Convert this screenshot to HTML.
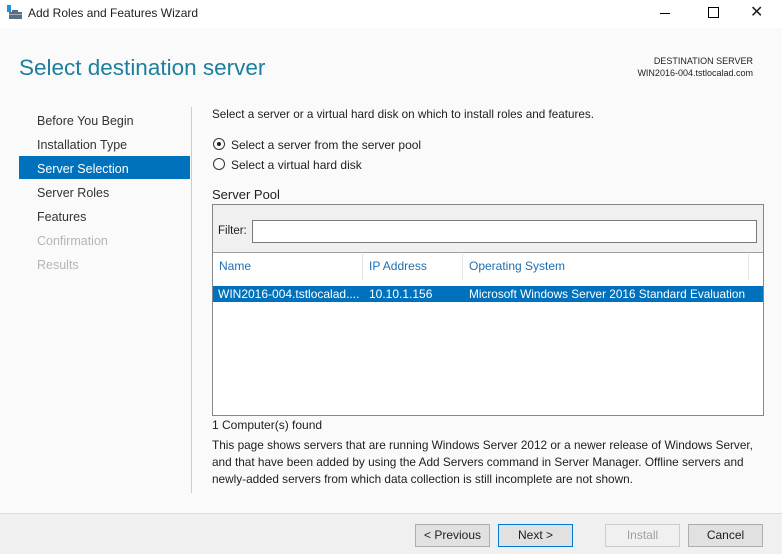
<!DOCTYPE html>
<html><head><style>
*{margin:0;padding:0;box-sizing:border-box}
body{width:782px;height:554px;background:#fafafa;font-family:"Liberation Sans",sans-serif;font-size:12px;color:#1e1e1e;position:relative;overflow:hidden}
.a{position:absolute;white-space:nowrap}
.nav{position:absolute;left:37px;font-size:12.5px;color:#333}
.btn{position:absolute;top:524px;height:23px;width:75px;border:1px solid #adadad;background:#e1e1e1;text-align:center;line-height:21px;font-size:12px}
</style></head><body>
<div class="a" style="left:0;top:0;width:782px;height:28px;background:#fff"></div>
<svg class="a" style="left:7px;top:5px" width="16" height="15"><rect x="0" y="0" width="4" height="3" fill="#1e90e0"/><rect x="0" y="3" width="4" height="4" fill="#1e90e0"/><rect x="2" y="7" width="13" height="7" fill="#5a6f85"/><rect x="5" y="5" width="6" height="2" fill="#5a6f85"/><rect x="2" y="9" width="13" height="1" fill="#aab"/></svg>
<div class="a" style="left:28px;top:6px;font-size:12px">Add Roles and Features Wizard</div>
<div class="a" style="left:660px;top:13px;width:10px;height:1px;background:#000"></div>
<div class="a" style="left:708px;top:7px;width:11px;height:11px;border:1px solid #000"></div>
<div class="a" style="left:750px;top:2px;font-size:16px">✕</div>
<div class="a" style="left:19px;top:55px;font-size:22.5px;color:#1d7fa0">Select destination server</div>
<div class="a" style="right:29px;top:55px;font-size:9px;text-align:right;line-height:12px">DESTINATION SERVER<br>WIN2016-004.tstlocalad.com</div>
<div class="nav" style="top:114px">Before You Begin</div>
<div class="nav" style="top:138px">Installation Type</div>
<div class="a" style="left:19px;top:156px;width:171px;height:23px;background:#0071bc"></div>
<div class="nav" style="top:162px;color:#fff">Server Selection</div>
<div class="nav" style="top:186px">Server Roles</div>
<div class="nav" style="top:210px">Features</div>
<div class="nav" style="top:234px;color:#b5b5b5">Confirmation</div>
<div class="nav" style="top:258px;color:#b5b5b5">Results</div>
<div class="a" style="left:191px;top:107px;width:1px;height:386px;background:#ccc"></div>
<div class="a" style="left:212px;top:108px;font-size:11.7px">Select a server or a virtual hard disk on which to install roles and features.</div>
<div class="a" style="left:213px;top:138px;width:12px;height:12px;border:1px solid #333;border-radius:50%;background:#fff"></div>
<div class="a" style="left:217px;top:142px;width:4px;height:4px;border-radius:50%;background:#222"></div>
<div class="a" style="left:231px;top:138px">Select a server from the server pool</div>
<div class="a" style="left:213px;top:158px;width:12px;height:12px;border:1px solid #333;border-radius:50%;background:#fff"></div>
<div class="a" style="left:231px;top:158px">Select a virtual hard disk</div>
<div class="a" style="left:212px;top:187px;font-size:13px">Server Pool</div>
<div class="a" style="left:212px;top:204px;width:552px;height:212px;border:1px solid #828790;background:#fff"></div>
<div class="a" style="left:213px;top:205px;width:550px;height:48px;background:#f0f0f0;border-bottom:1px solid #a0a0a0"></div>
<div class="a" style="left:218px;top:225px;font-size:11.5px">Filter:</div>
<div class="a" style="left:252px;top:220px;width:505px;height:23px;border:1px solid #7a7a7a;background:#fff"></div>
<div class="a" style="left:219px;top:259px;color:#1e6fb0">Name</div>
<div class="a" style="left:362px;top:254px;width:1px;height:26px;background:#e5e5e5"></div>
<div class="a" style="left:369px;top:259px;color:#1e6fb0">IP Address</div>
<div class="a" style="left:462px;top:254px;width:1px;height:26px;background:#e5e5e5"></div>
<div class="a" style="left:469px;top:259px;color:#1e6fb0">Operating System</div>
<div class="a" style="left:748px;top:254px;width:1px;height:26px;background:#e5e5e5"></div>
<div class="a" style="left:213px;top:286px;width:550px;height:16px;background:#0071bc"></div>
<div class="a" style="left:218px;top:287px;color:#fff">WIN2016-004.tstlocalad....</div>
<div class="a" style="left:369px;top:287px;color:#fff">10.10.1.156</div>
<div class="a" style="left:469px;top:287px;color:#fff;font-size:11.8px">Microsoft Windows Server 2016 Standard Evaluation</div>
<div class="a" style="left:212px;top:418px">1 Computer(s) found</div>
<div class="a" style="left:212px;top:437px;line-height:17px;font-size:11.8px">This page shows servers that are running Windows Server 2012 or a newer release of Windows Server,<br>and that have been added by using the Add Servers command in Server Manager. Offline servers and<br>newly-added servers from which data collection is still incomplete are not shown.</div>
<div class="a" style="left:0;top:513px;width:782px;height:41px;background:#f0f0f0;border-top:1px solid #dcdcdc"></div>
<div class="btn" style="left:415px">&lt; Previous</div>
<div class="btn" style="left:498px;border-color:#0078d7">Next &gt;</div>
<div class="btn" style="left:605px;background:#f0f0f0;border-color:#ccc;color:#a0a0a0">Install</div>
<div class="btn" style="left:688px">Cancel</div>
</body></html>
